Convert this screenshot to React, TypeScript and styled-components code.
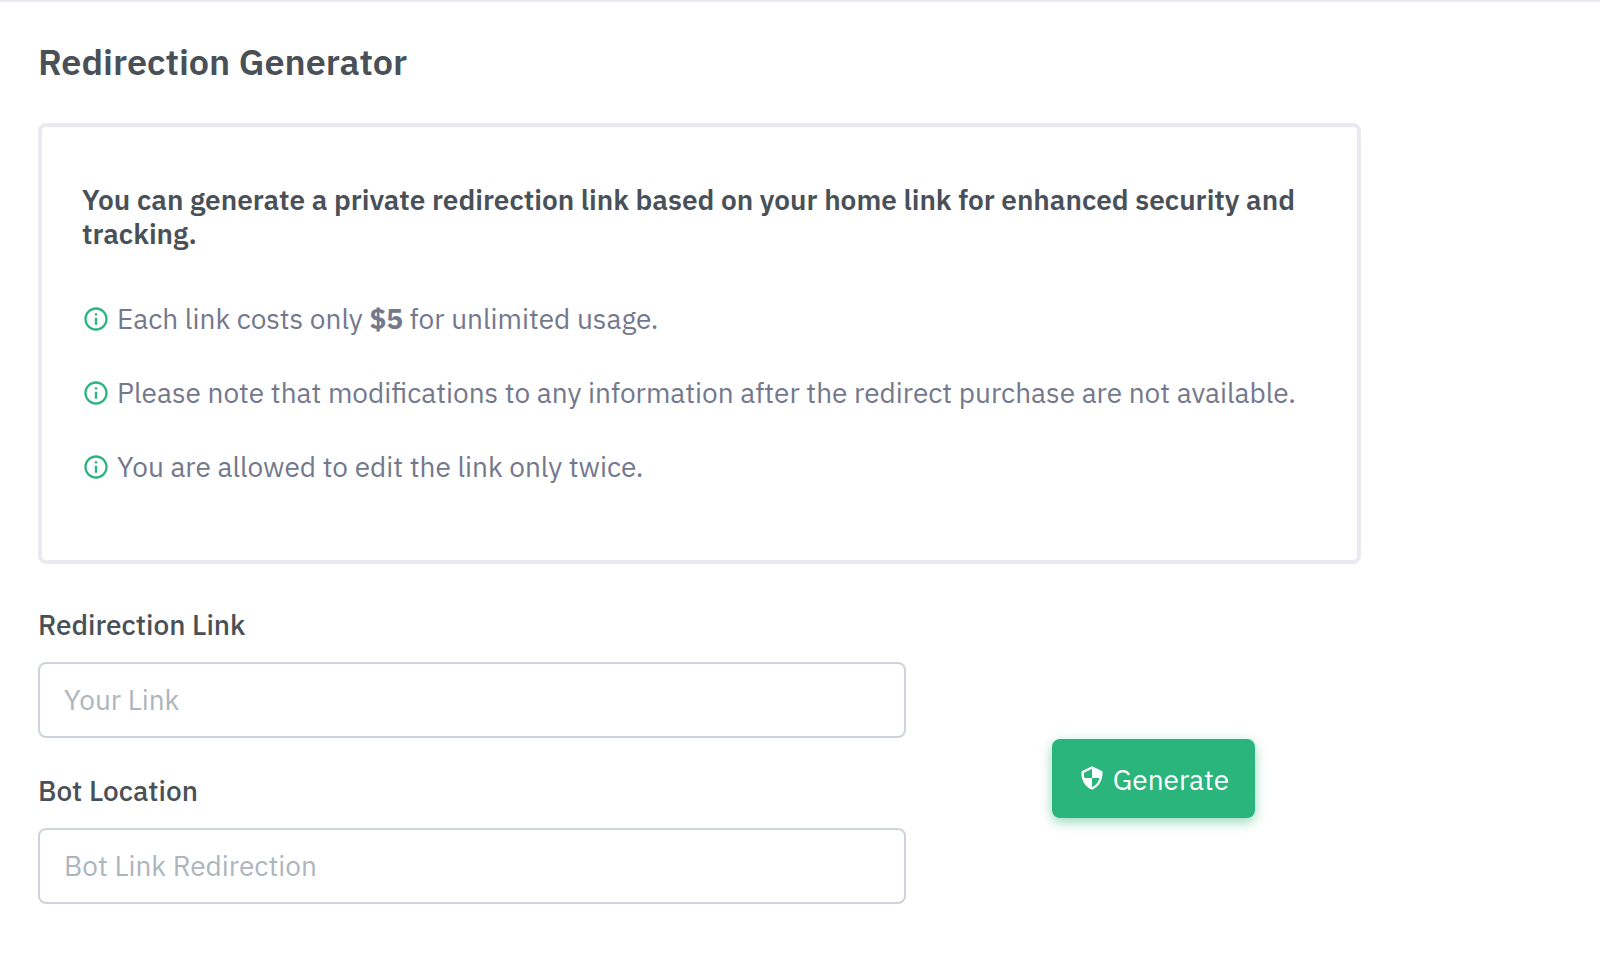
import React from 'react';
import styled, { createGlobalStyle } from 'styled-components';
import { BiInfoCircle } from 'react-icons/bi';

const colors = {
  heading: '#495057',
  body: '#74788d',
  line: '#e9e9ef',
  inputLine: '#ced4da',
  placeholder: '#adb5bd',
  green: '#2ab57d',
};

const GlobalStyle = createGlobalStyle`
  *, *::before, *::after { box-sizing: border-box; }
  body {
    margin: 0;
    background: #fff;
    color: ${colors.body};
    font-family: "IBM Plex Sans", Roboto, sans-serif;
    font-size: 28px;
    line-height: 42px;
  }
`;

const Page = styled.main`
  border-top: 2px solid ${colors.line};
  padding: 38px;
`;

const Content = styled.div`
  max-width: 1323px;
`;

const Title = styled.h1`
  margin: 0 0 40px;
  color: ${colors.heading};
  font-size: 36px;
  font-weight: 600;
  line-height: 43px;
`;

const Card = styled.section`
  margin-bottom: 40px;
  padding: 56px 40px 40px;
  border: 4px solid ${colors.line};
  border-radius: 8px;
`;

const CardTitle = styled.h2`
  margin: 0 0 47px;
  color: ${colors.heading};
  font-size: 28px;
  font-weight: 600;
  line-height: 34px;
`;

const Notes = styled.ul`
  margin: 0;
  padding: 0;
  list-style: none;
`;

const Note = styled.li`
  display: flex;
  align-items: center;
  gap: 7px;
  margin-bottom: 32px;
`;

const InfoIcon = styled(BiInfoCircle)`
  flex: none;
  width: 28px;
  height: 28px;
  color: ${colors.green};
`;

const Amount = styled.strong`
  font-weight: 700;
`;

const Form = styled.form`
  display: grid;
  grid-template-columns: 868fr 455fr;
  align-items: center;
`;

const Field = styled.div`
  display: flex;
  flex-direction: column;
  margin-bottom: 32px;

  &:last-child { margin-bottom: 48px; }
`;

const Label = styled.label`
  margin-bottom: 16px;
  color: ${colors.heading};
  font-weight: 500;
`;

const Input = styled.input`
  width: 100%;
  height: 76px;
  padding: 0 24px 2px;
  border: 2px solid ${colors.inputLine};
  border-radius: 8px;
  background: #fff;
  color: ${colors.heading};
  font: inherit;

  &::placeholder { color: ${colors.placeholder}; opacity: 1; }
`;

const Actions = styled.div`
  display: flex;
  justify-content: center;
  padding-left: 40px;
`;

const Button = styled.button`
  display: inline-flex;
  align-items: center;
  gap: 7px;
  padding: 20px 26px 17px;
  border: 0;
  border-radius: 8px;
  background: ${colors.green};
  box-shadow: 0 4px 12px rgba(42, 181, 125, 0.5);
  color: #fff;
  font: inherit;
  cursor: pointer;
`;

const Shield = styled.svg`
  flex: none;
  width: 28px;
  height: 28px;
  margin-bottom: 4px;
  fill: currentColor;
`;

const notes: React.ReactNode[] = [
  <>Each link costs only <Amount>$5</Amount> for unlimited usage.</>,
  'Please note that modifications to any information after the redirect purchase are not available.',
  'You are allowed to edit the link only twice.',
];

const fields = [
  { id: 'redirection-link', label: 'Redirection Link', placeholder: 'Your Link' },
  { id: 'bot-location', label: 'Bot Location', placeholder: 'Bot Link Redirection' },
];

export default function App() {
  return (
    <>
      <GlobalStyle />
      <Page>
        <Content>
          <Title>Redirection Generator</Title>
          <Card>
            <CardTitle>
              You can generate a private redirection link based on your home link for enhanced security and tracking.
            </CardTitle>
            <Notes>
              {notes.map((note, i) => (
                <Note key={i}>
                  <InfoIcon aria-hidden="true" />
                  <span>{note}</span>
                </Note>
              ))}
            </Notes>
          </Card>
          <Form onSubmit={(e) => e.preventDefault()}>
            <div>
              {fields.map((f) => (
                <Field key={f.id}>
                  <Label htmlFor={f.id}>{f.label}</Label>
                  <Input id={f.id} type="text" placeholder={f.placeholder} />
                </Field>
              ))}
            </div>
            <Actions>
              <Button type="submit">
                <Shield viewBox="0 0 24 24" aria-hidden="true">
                  <path d="M20.995 6.9a.998.998 0 0 0-.548-.795l-8-4a1 1 0 0 0-.895 0l-8 4a1.002 1.002 0 0 0-.547.795c-.011.107-.961 10.767 8.589 15.014a.987.987 0 0 0 .812 0c9.55-4.247 8.6-14.906 8.589-15.014zM12 19.897V12H5.51a15.473 15.473 0 0 1-.544-4.365L12 4.118V12h6.46c-.759 2.74-2.498 5.979-6.46 7.897z" />
                </Shield>
                Generate
              </Button>
            </Actions>
          </Form>
        </Content>
      </Page>
    </>
  );
}
